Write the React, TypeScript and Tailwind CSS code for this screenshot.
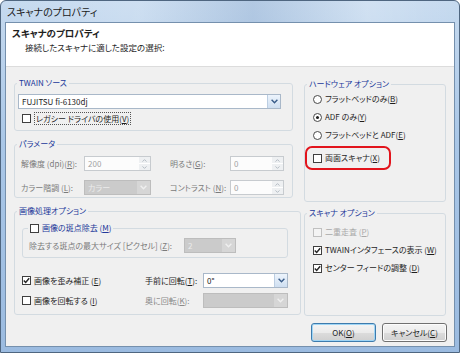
import type { ReactNode } from 'react'
import clsx from 'clsx'

// mnemonic letter, underlined like the Windows dialog
const U = ({ children }: { children: ReactNode }) => (
  <span className="underline underline-offset-[1px]">{children}</span>
)

function Chevron({ color }: { color: string }) {
  return (
    <svg width="7" height="5" viewBox="0 0 7 5">
      <path d="M0.6 0.8 L3.5 3.8 L6.4 0.8" fill="none" stroke={color} strokeWidth="1.4" />
    </svg>
  )
}

function Check({ checked, disabled }: { checked?: boolean; disabled?: boolean }) {
  return (
    <span
      className={clsx(
        'w-[9px] h-[9px] shrink-0 border flex items-center justify-center',
        disabled ? 'border-[#c0c0c0] bg-[#f4f4f4]' : 'border-[#3f3f3f] bg-white'
      )}
    >
      {checked && (
        <svg width="7" height="7" viewBox="0 0 7 7">
          <path d="M0.8 3.4 L2.7 5.4 L6.2 1.2" fill="none" stroke="#2a2a2a" strokeWidth="1.5" />
        </svg>
      )}
    </span>
  )
}

function Radio({ checked }: { checked?: boolean }) {
  return (
    <span className="w-[9px] h-[9px] shrink-0 rounded-full border border-[#4a4a4a] bg-white flex items-center justify-center">
      {checked && <span className="w-[3px] h-[3px] rounded-full bg-[#1f1f1f]" />}
    </span>
  )
}

function Combo({ value, disabled, className }: { value?: string; disabled?: boolean; className?: string }) {
  return (
    <div
      className={clsx(
        'h-[15px] shrink-0 flex border',
        disabled ? 'bg-[#cbcbcb] border-[#bdbdbd]' : 'bg-white border-[#a9b8c9]',
        className
      )}
    >
      <span className={clsx('flex-1 pl-[3px] leading-[13px] truncate', disabled ? 'text-[#ececec]' : 'text-[#1e1e1e]')}>
        {value}
      </span>
      <span
        className={clsx(
          'w-[13px] flex items-center justify-center',
          disabled ? 'bg-[#d6d6d6]' : 'bg-[linear-gradient(#edf4fc,#cfdff1)] border-l border-[#bccee2]'
        )}
      >
        <Chevron color={disabled ? '#efefef' : '#3a5d8a'} />
      </span>
    </div>
  )
}

function Spin({ value, className }: { value: string; className?: string }) {
  return (
    <div className={clsx('h-[15px] shrink-0 flex border border-[#c7cbcf] bg-[#fcfcfc]', className)}>
      <span className="flex-1 pl-[3px] leading-[13px] text-[#a3a3a3]">{value}</span>
      <span className="w-[11px] flex flex-col bg-[#eef0f2]">
        <span className="flex-1 flex items-center justify-center border-b border-white">
          <svg width="5" height="3" viewBox="0 0 5 3">
            <path d="M0.5 2.6 L2.5 0.6 L4.5 2.6" fill="none" stroke="#b5bcc4" strokeWidth="1" />
          </svg>
        </span>
        <span className="flex-1 flex items-center justify-center">
          <svg width="5" height="3" viewBox="0 0 5 3">
            <path d="M0.5 0.4 L2.5 2.4 L4.5 0.4" fill="none" stroke="#b5bcc4" strokeWidth="1" />
          </svg>
        </span>
      </span>
    </div>
  )
}

function Group({ title, className, children }: { title: string; className?: string; children: ReactNode }) {
  return (
    <fieldset className={clsx('border border-[#d3dbe1] rounded-[3px]', className)}>
      <legend className="ml-[2px] px-[2px] leading-[12px] text-[#22389a]">{title}</legend>
      {children}
    </fieldset>
  )
}

function Button({ children, primary }: { children: ReactNode; primary?: boolean }) {
  return (
    <div
      className={clsx(
        'w-[65px] h-[19px] rounded-[3px] border flex items-center justify-center text-[#1e1e1e]',
        'bg-[linear-gradient(#f4f4f4_0%,#ebebeb_50%,#dcdcdc_51%,#d0d0d0_100%)]',
        primary ? 'border-[#3d7bad] shadow-[inset_0_0_0_1px_#9fd5f5]' : 'border-[#707070] shadow-[inset_0_0_0_1px_#fcfcfc]'
      )}
    >
      {children}
    </div>
  )
}

export default function App() {
  return (
    <div
      className={clsx(
        "w-[460px] h-[353px] flex flex-col rounded-t-[6px] border border-[#4f6680] overflow-hidden whitespace-nowrap",
        "bg-[linear-gradient(180deg,#c6daef_0%,#aac7e7_40%,#9bbbe0_100%)]",
        "font-['Noto_Sans_CJK_JP',sans-serif] [font-feature-settings:'palt'] text-[8px] text-[#1e1e1e]"
      )}
    >
      {/* title bar */}
      <div className="h-[21px] shrink-0 flex items-center pl-[6px] text-[10px] text-[#1a1a1a] bg-[linear-gradient(90deg,transparent_0%,rgba(255,255,255,0.15)_30%,rgba(120,150,190,0.25)_55%,rgba(255,255,255,0.2)_80%,transparent_100%)]">
        スキャナのプロパティ
      </div>

      <div className="flex-1 mx-[4px] mb-[5px] border border-[#7590ad] bg-[#f0f0f0] flex flex-col">
        {/* header */}
        <div className="h-[44px] shrink-0 bg-white border-b border-[#dcdcdc] pt-[4px]">
          <div className="pl-[6px] leading-[13px] text-[9.5px] font-bold">スキャナのプロパティ</div>
          <div className="pl-[19px] mt-[1px] leading-[12px] text-[8.5px]">接続したスキャナに適した設定の選択:</div>
        </div>

        {/* body */}
        <div className="flex-1 px-[8px] flex flex-col">
          <div className="flex gap-[11px]">
            {/* left column */}
            <div className="w-[279px] flex flex-col">
              <Group title="TWAIN ソース" className="mt-[10px] h-[54px]">
                <div className="pl-[3px] pr-[11px] pt-[5px]">
                  <Combo value="FUJITSU fi-6130dj" />
                  <div className="mt-[3px] h-[13px] flex items-center pl-[4px] gap-[3px]">
                    <Check />
                    <span className="px-[1px] leading-[11px] border border-dotted border-[#555]">
                      レガシー ドライバの使用(<U>V</U>)
                    </span>
                  </div>
                </div>
              </Group>

              <Group title="パラメータ" className="mt-[7px] h-[60px]">
                <div className="pl-[6px] pt-[6px] flex flex-col gap-[9px] text-[#7b7b7b]">
                  <div className="h-[15px] flex items-center">
                    <span className="w-[63px]">解像度 (dpi)(<U>R</U>):</span>
                    <Spin value="200" className="w-[67px]" />
                    <span className="ml-[19px] w-[60px]">明るさ(<U>G</U>):</span>
                    <Spin value="0" className="w-[54px]" />
                  </div>
                  <div className="h-[15px] flex items-center">
                    <span className="w-[63px]">カラー階調 (<U>L</U>):</span>
                    <Combo value="カラー" disabled className="w-[67px]" />
                    <span className="ml-[19px] w-[60px]">コントラスト (<U>N</U>):</span>
                    <Spin value="0" className="w-[54px]" />
                  </div>
                </div>
              </Group>

              <Group title="画像処理オプション" className="mt-[7px] h-[110px]">
                <div className="pl-[7px] pr-[12px] pt-[5px]">
                  <fieldset className="border border-[#d3dbe1] rounded-[3px] h-[36px]">
                    <legend className="ml-[5px] px-[2px] leading-[12px] flex items-center gap-[3px] text-[#22389a]">
                      <Check />
                      <span>
                        画像の斑点除去 (<U>M</U>)
                      </span>
                    </legend>
                    <div className="pl-[6px] pt-[4px] h-[19px] flex items-center text-[#7b7b7b]">
                      <span className="w-[155px]">除去する斑点の最大サイズ [ピクセル] (<U>Z</U>):</span>
                      <Combo value="2" disabled className="w-[52px]" />
                    </div>
                  </fieldset>

                  <div className="mt-[15px] h-[15px] flex items-center">
                    <span className="w-[123px] flex items-center gap-[3px]">
                      <Check checked />
                      <span>
                        画像を歪み補正 (<U>E</U>)
                      </span>
                    </span>
                    <span className="w-[58px]">手前に回転(<U>T</U>):</span>
                    <Combo value="0°" className="w-[85px]" />
                  </div>
                  <div className="mt-[5px] h-[15px] flex items-center">
                    <span className="w-[123px] flex items-center gap-[3px]">
                      <Check />
                      <span>
                        画像を回転する (<U>I</U>)
                      </span>
                    </span>
                    <span className="w-[58px] text-[#8a8a8a]">奥に回転(<U>K</U>):</span>
                    <Combo disabled className="w-[85px]" />
                  </div>
                </div>
              </Group>
            </div>

            {/* right column */}
            <div className="w-[142px] flex flex-col">
              <Group title="ハードウェア オプション" className="mt-[11px] h-[124px]">
                <div className="flex flex-col">
                  {[
                    { label: 'フラットベッドのみ', key: 'B' },
                    { label: 'ADF のみ', key: 'Y', checked: true },
                    { label: 'フラットベッドと ADF', key: 'E' },
                  ].map((r) => (
                    <div key={r.key} className="h-[18px] flex items-center gap-[3px] pl-[8px]">
                      <Radio checked={r.checked} />
                      <span>
                        {r.label}(<U>{r.key}</U>)
                      </span>
                    </div>
                  ))}
                  <div className="mt-[2px] w-[86px] h-[24px] rounded-[7px] border-2 border-[#e2141c] flex items-center gap-[3px] pl-[6px]">
                    <Check />
                    <span>
                      両面スキャナ(<U>X</U>)
                    </span>
                  </div>
                </div>
              </Group>

              <Group title="スキャナ オプション" className="mt-[5px] h-[109px]">
                <div className="flex flex-col pt-[4px]">
                  <div className="h-[18px] flex items-center gap-[3px] pl-[8px] text-[#a9a9a9]">
                    <Check disabled />
                    <span>
                      二重走査 (<U>P</U>)
                    </span>
                  </div>
                  <div className="h-[18px] flex items-center gap-[3px] pl-[8px]">
                    <Check checked />
                    <span>
                      TWAINインタフェースの表示 (<U>W</U>)
                    </span>
                  </div>
                  <div className="h-[18px] flex items-center gap-[3px] pl-[8px]">
                    <Check checked />
                    <span>
                      センター フィードの調整 (<U>D</U>)
                    </span>
                  </div>
                </div>
              </Group>
            </div>
          </div>

          {/* buttons */}
          <div className="mt-[7px] -mr-[1px] flex justify-end gap-[6px]">
            <Button primary>
              OK(<U>O</U>)
            </Button>
            <Button>
              キャンセル(<U>C</U>)
            </Button>
          </div>
        </div>
      </div>
    </div>
  )
}
